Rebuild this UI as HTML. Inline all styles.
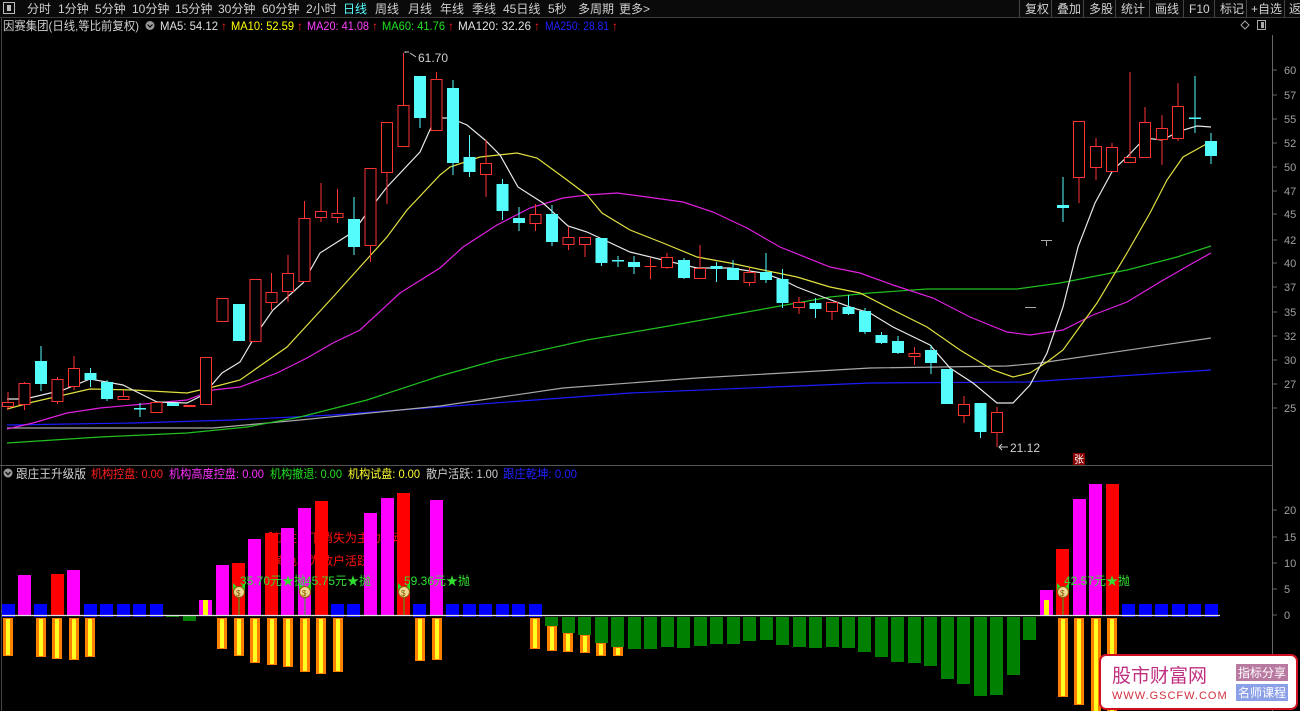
<!DOCTYPE html>
<html><head><meta charset="utf-8"><style>
html,body{margin:0;padding:0;background:#000;width:1300px;height:711px;overflow:hidden;font-family:"Liberation Sans","Noto Sans CJK SC",sans-serif}
svg{display:block}
text{font-family:"Liberation Sans","Noto Sans CJK SC",sans-serif}
.r line{stroke:#ff3232;stroke-width:1}
.r rect{fill:#000;stroke:#ff3232;stroke-width:1}
.c line{stroke:#54fcfc;stroke-width:1}
.c rect{fill:#54fcfc}
.ma{fill:none;stroke-width:1.2}
.tb{fill:#d0d0d0;font-size:12px}
.ax{fill:#a0a0a0;font-size:11px}
</style></head><body>
<svg width="1300" height="711" viewBox="0 0 1300 711" xmlns="http://www.w3.org/2000/svg">
<rect width="1300" height="711" fill="#000"/>
<!-- toolbar -->
<rect x="0" y="0" width="1300" height="17" fill="#0a0a0a"/>
<line x1="0" y1="17.5" x2="1300" y2="17.5" stroke="#3a3a3a"/>
<rect x="3.5" y="2.5" width="11" height="11" fill="none" stroke="#bbb"/><rect x="7" y="5" width="4" height="6" fill="#bbb"/>
<g class="tb">
<text x="27" y="13">分时</text><text x="58" y="13">1分钟</text><text x="95" y="13">5分钟</text><text x="132" y="13">10分钟</text><text x="175" y="13">15分钟</text><text x="218" y="13">30分钟</text><text x="262" y="13">60分钟</text><text x="306" y="13">2小时</text><text x="343" y="13" fill="#54fcfc">日线</text><text x="375" y="13">周线</text><text x="408" y="13">月线</text><text x="440" y="13">年线</text><text x="472" y="13">季线</text><text x="503" y="13">45日线</text><text x="548" y="13">5秒</text><text x="578" y="13">多周期</text><text x="619" y="13">更多&gt;</text>
<text x="1025" y="13">复权</text><text x="1057" y="13">叠加</text><text x="1089" y="13">多股</text><text x="1121" y="13">统计</text><text x="1155" y="13">画线</text><text x="1189" y="13">F10</text><text x="1220" y="13">标记</text><text x="1251" y="13">+自选</text><text x="1289" y="13">返</text>
</g>
<g stroke="#444"><line x1="1019.5" y1="0" x2="1019.5" y2="17"/><line x1="1051.5" y1="0" x2="1051.5" y2="17"/><line x1="1083.5" y1="0" x2="1083.5" y2="17"/><line x1="1115.5" y1="0" x2="1115.5" y2="17"/><line x1="1149.5" y1="0" x2="1149.5" y2="17"/><line x1="1183.5" y1="0" x2="1183.5" y2="17"/><line x1="1214.5" y1="0" x2="1214.5" y2="17"/><line x1="1246.5" y1="0" x2="1246.5" y2="17"/><line x1="1284.5" y1="0" x2="1284.5" y2="17"/></g>
<!-- header -->
<g font-size="12">
<text x="3" y="30" fill="#d0d0d0" textLength="136" lengthAdjust="spacingAndGlyphs">因赛集团(日线,等比前复权)</text>
<circle cx="150" cy="25.5" r="4.5" fill="#999"/><path d="M147.5 24.5 L150 27 L152.5 24.5" stroke="#000" fill="none" stroke-width="1.2"/>
<text x="160" y="30" fill="#e0e0e0" textLength="58" lengthAdjust="spacingAndGlyphs">MA5: 54.12</text><text x="221" y="30" fill="#ff2020">↑</text>
<text x="231" y="30" fill="#ffff00" textLength="63" lengthAdjust="spacingAndGlyphs">MA10: 52.59</text><text x="297" y="30" fill="#ff2020">↑</text>
<text x="307" y="30" fill="#ff40ff" textLength="62" lengthAdjust="spacingAndGlyphs">MA20: 41.08</text><text x="372" y="30" fill="#ff2020">↑</text>
<text x="382" y="30" fill="#20e020" textLength="63" lengthAdjust="spacingAndGlyphs">MA60: 41.76</text><text x="448" y="30" fill="#ff2020">↑</text>
<text x="458" y="30" fill="#e0e0e0" textLength="73" lengthAdjust="spacingAndGlyphs">MA120: 32.26</text><text x="534" y="30" fill="#ff2020">↑</text>
<text x="545" y="30" fill="#2020ff" textLength="64" lengthAdjust="spacingAndGlyphs">MA250: 28.81</text><text x="612" y="30" fill="#ff2020">↑</text>
</g>
<path d="M1245 21 L1249 25 L1245 29 L1241 25 Z" fill="none" stroke="#aaa"/>
<rect x="1257.5" y="20.5" width="8" height="9" fill="none" stroke="#aaa"/><rect x="1261" y="22" width="3" height="6" fill="#aaa"/>
<line x1="1.5" y1="18" x2="1.5" y2="711" stroke="#444"/>
<!-- right axis -->
<line x1="1272.5" y1="35" x2="1272.5" y2="711" stroke="#666"/>
<line x1="0" y1="465.5" x2="1272" y2="465.5" stroke="#555"/>
<g class="ax">
<text x="1284" y="74">60</text><text x="1284" y="99">57</text><text x="1284" y="123">55</text><text x="1284" y="147">52</text><text x="1284" y="171">50</text><text x="1284" y="195">47</text><text x="1284" y="218">45</text><text x="1284" y="244">42</text><text x="1284" y="267">40</text><text x="1284" y="291">37</text><text x="1284" y="316">35</text><text x="1284" y="340">32</text><text x="1284" y="364">30</text><text x="1284" y="388">27</text><text x="1284" y="412">25</text>
<text x="1284" y="514">20</text><text x="1284" y="541">15</text><text x="1284" y="567">10</text><text x="1284" y="593">5</text><text x="1284" y="619">0</text>
</g>
<g stroke="#666"><line x1="1272" y1="70" x2="1277" y2="70"/><line x1="1272" y1="95" x2="1277" y2="95"/><line x1="1272" y1="119" x2="1277" y2="119"/><line x1="1272" y1="143" x2="1277" y2="143"/><line x1="1272" y1="167" x2="1277" y2="167"/><line x1="1272" y1="191" x2="1277" y2="191"/><line x1="1272" y1="214" x2="1277" y2="214"/><line x1="1272" y1="240" x2="1277" y2="240"/><line x1="1272" y1="263" x2="1277" y2="263"/><line x1="1272" y1="287" x2="1277" y2="287"/><line x1="1272" y1="312" x2="1277" y2="312"/><line x1="1272" y1="336" x2="1277" y2="336"/><line x1="1272" y1="360" x2="1277" y2="360"/><line x1="1272" y1="384" x2="1277" y2="384"/><line x1="1272" y1="408" x2="1277" y2="408"/><line x1="1272" y1="510" x2="1277" y2="510"/><line x1="1272" y1="537" x2="1277" y2="537"/><line x1="1272" y1="563" x2="1277" y2="563"/><line x1="1272" y1="589" x2="1277" y2="589"/><line x1="1272" y1="615" x2="1277" y2="615"/></g>

<!-- MA lines -->
<polyline class="ma" stroke="#1c1cff" points="7,425 133,423 233,420 333,415 440,407 630,393 870,383 1027,382 1211,370"/>
<polyline class="ma" stroke="#a8a8a8" points="7,428 213,428 300,420 440,406 563,388 697,378 870,368 1007,366 1040,363 1211,338"/>
<polyline class="ma" stroke="#20c020" points="7,443 100,437 187,433 247,427 300,417 367,400 440,376 497,360 587,340 663,327 747,312 830,297 870,293 927,289 1017,289 1060,283 1127,270 1177,257 1211,246"/>
<polyline class="ma" stroke="#e020e0" points="7,429 33,423 67,413 100,408 133,405 187,400 213,390 240,387 277,373 307,358 333,343 360,330 400,293 440,268 463,247 497,225 530,208 563,198 587,195 617,193 647,197 683,202 713,212 747,228 780,247 830,267 860,273 893,285 933,298 970,317 1007,332 1030,335 1063,330 1093,315 1127,302 1160,282 1193,263 1211,253"/>
<polyline class="ma" stroke="#e0e040" points="7,409 33,402 90,389 133,390 187,393 213,387 240,380 287,347 333,297 387,237 407,210 440,175 450,167 480,157 517,153 537,158 563,177 587,195 602,213 630,230 663,243 697,257 730,263 763,270 797,277 830,287 860,293 893,310 927,327 960,350 993,370 1013,377 1030,373 1047,362 1063,350 1097,303 1127,253 1150,213 1167,180 1183,157 1210,142"/>
<polyline class="ma" stroke="#e8e8e8" points="7,399 25,399 63,390 90,379 123,385 157,402 187,403 203,395 222,373 240,362 257,333 273,310 303,283 320,253 353,232 367,213 387,187 420,152 433,123 440,118 450,118 467,125 485,140 500,155 518,187 543,203 568,226 587,232 630,252 663,260 697,268 730,268 763,273 783,280 797,287 823,297 850,307 870,313 893,327 930,345 950,368 973,383 997,403 1013,403 1030,385 1047,353 1063,307 1078,247 1095,203 1113,170 1127,157 1145,138 1162,140 1180,131 1197,126 1211,127"/>

<!-- candles -->
<g class="r">
<line x1="8" y1="392" x2="8" y2="410"/><rect x="2.5" y="402.5" width="11" height="4"/>
<line x1="24.5" y1="382" x2="24.5" y2="410"/><rect x="19" y="383.5" width="11" height="21"/>
<line x1="57.5" y1="377" x2="57.5" y2="404"/><rect x="52" y="379.5" width="11" height="22"/>
<line x1="74" y1="356" x2="74" y2="390"/><rect x="68.5" y="368.5" width="11" height="18"/>
<line x1="123.5" y1="390" x2="123.5" y2="399"/><rect x="118" y="396.5" width="11" height="3"/>
<rect x="151" y="402.5" width="11" height="10"/>
<rect x="184" y="405.5" width="11" height="1"/>
<rect x="200.5" y="357.5" width="11" height="47"/>
<rect x="217" y="298.5" width="11" height="23"/>
<rect x="250" y="279.5" width="11" height="62"/>
<line x1="271.5" y1="273" x2="271.5" y2="310"/><rect x="266" y="292.5" width="11" height="10"/>
<line x1="288" y1="255" x2="288" y2="302"/><rect x="282.5" y="273.5" width="11" height="18"/>
<line x1="304.5" y1="201" x2="304.5" y2="282"/><rect x="299" y="218.5" width="11" height="63"/>
<line x1="321" y1="183" x2="321" y2="222"/><rect x="315.5" y="211.5" width="11" height="6"/>
<line x1="337.5" y1="189" x2="337.5" y2="223"/><rect x="332" y="213.5" width="11" height="4"/>
<line x1="370.5" y1="168" x2="370.5" y2="262"/><rect x="365" y="168.5" width="11" height="77"/>
<line x1="387" y1="122" x2="387" y2="204"/><rect x="381.5" y="122.5" width="11" height="50"/>
<line x1="403.5" y1="53" x2="403.5" y2="147"/><rect x="398" y="105.5" width="11" height="41"/>
<line x1="436.5" y1="72" x2="436.5" y2="131"/><rect x="431" y="79.5" width="11" height="51"/>
<line x1="486" y1="140" x2="486" y2="197"/><rect x="480.5" y="163.5" width="11" height="11"/>
<line x1="535.5" y1="204" x2="535.5" y2="231"/><rect x="530" y="214.5" width="11" height="9"/>
<line x1="568.5" y1="227" x2="568.5" y2="250"/><rect x="563" y="237.5" width="11" height="7"/>
<line x1="585" y1="237" x2="585" y2="257"/><rect x="579.5" y="237.5" width="11" height="7"/>
<line x1="650.5" y1="258" x2="650.5" y2="279"/><line x1="644.5" y1="266.5" x2="656.5" y2="266.5"/>
<line x1="667" y1="253" x2="667" y2="269"/><rect x="661.5" y="257.5" width="11" height="10"/>
<line x1="700" y1="245" x2="700" y2="278"/><rect x="694.5" y="268.5" width="11" height="10"/>
<line x1="749.5" y1="268" x2="749.5" y2="286"/><rect x="744" y="272.5" width="11" height="10"/>
<line x1="799" y1="297" x2="799" y2="314"/><rect x="793.5" y="302.5" width="11" height="5"/>
<line x1="832" y1="302" x2="832" y2="320"/><rect x="826.5" y="302.5" width="11" height="9"/>
<line x1="914.5" y1="347" x2="914.5" y2="365"/><rect x="909" y="353.5" width="11" height="3"/>
<line x1="964" y1="396" x2="964" y2="423"/><rect x="958.5" y="404.5" width="11" height="11"/>
<line x1="997" y1="407" x2="997" y2="447"/><rect x="991.5" y="412.5" width="11" height="20"/>
<line x1="1079" y1="121" x2="1079" y2="203"/><rect x="1073.5" y="121.5" width="11" height="56"/>
<line x1="1096" y1="138" x2="1096" y2="180"/><rect x="1090.5" y="146.5" width="11" height="21"/>
<line x1="1112" y1="143" x2="1112" y2="171"/><rect x="1106.5" y="147.5" width="11" height="24"/>
<line x1="1130" y1="72" x2="1130" y2="163"/><rect x="1124.5" y="157.5" width="11" height="5"/>
<line x1="1145" y1="107" x2="1145" y2="157"/><rect x="1139.5" y="122.5" width="11" height="35"/>
<line x1="1162" y1="115" x2="1162" y2="165"/><rect x="1156.5" y="128.5" width="11" height="11"/>
<line x1="1178" y1="83" x2="1178" y2="141"/><rect x="1172.5" y="106.5" width="11" height="32"/>
</g>
<g class="c">
<line x1="41" y1="346" x2="41" y2="391"/><rect x="35" y="361" width="12" height="23"/>
<line x1="90.5" y1="368" x2="90.5" y2="387"/><rect x="84.5" y="373" width="12" height="7"/>
<line x1="107" y1="380" x2="107" y2="401"/><rect x="101" y="382" width="12" height="17"/>
<line x1="140" y1="403" x2="140" y2="417"/><rect x="134" y="408" width="12" height="1.5"/>
<rect x="167" y="403" width="12" height="3"/>
<rect x="233" y="304" width="12" height="37"/>
<line x1="354" y1="197" x2="354" y2="255"/><rect x="348" y="219" width="12" height="28"/>
<line x1="420" y1="76" x2="420" y2="128"/><rect x="414" y="76" width="12" height="42"/>
<line x1="453" y1="80" x2="453" y2="175"/><rect x="447" y="88" width="12" height="75"/>
<line x1="469.5" y1="135" x2="469.5" y2="177"/><rect x="463.5" y="157" width="12" height="15"/>
<line x1="502.5" y1="179" x2="502.5" y2="220"/><rect x="496.5" y="184" width="12" height="27"/>
<line x1="519" y1="207" x2="519" y2="231"/><rect x="513" y="218" width="12" height="5"/>
<line x1="552" y1="205" x2="552" y2="246"/><rect x="546" y="214" width="12" height="28"/>
<line x1="601.5" y1="238" x2="601.5" y2="266"/><rect x="595.5" y="238" width="12" height="25"/>
<line x1="618" y1="256" x2="618" y2="267"/><rect x="612" y="260" width="12" height="1.5"/>
<line x1="634" y1="256" x2="634" y2="274"/><rect x="628" y="262" width="12" height="5"/>
<line x1="684" y1="258" x2="684" y2="279"/><rect x="678" y="260" width="12" height="18"/>
<line x1="716.5" y1="262" x2="716.5" y2="282"/><rect x="710.5" y="266" width="12" height="3"/>
<line x1="733" y1="260" x2="733" y2="280"/><rect x="727" y="268" width="12" height="12"/>
<line x1="766" y1="253" x2="766" y2="283"/><rect x="760" y="272" width="12" height="8"/>
<line x1="782.5" y1="269" x2="782.5" y2="308"/><rect x="776.5" y="279" width="12" height="24"/>
<line x1="815.5" y1="298" x2="815.5" y2="318"/><rect x="809.5" y="303" width="12" height="6"/>
<line x1="848.5" y1="295" x2="848.5" y2="315"/><rect x="842.5" y="307" width="12" height="7"/>
<line x1="865" y1="308" x2="865" y2="334"/><rect x="859" y="311" width="12" height="21"/>
<line x1="881.5" y1="332" x2="881.5" y2="344"/><rect x="875.5" y="335" width="12" height="8"/>
<line x1="898" y1="336" x2="898" y2="354"/><rect x="892" y="341" width="12" height="12"/>
<line x1="931" y1="345" x2="931" y2="374"/><rect x="925" y="350" width="12" height="13"/>
<rect x="941" y="369" width="12" height="35"/>
<line x1="980.5" y1="403" x2="980.5" y2="438"/><rect x="974.5" y="403" width="12" height="29"/>
<line x1="1063" y1="177" x2="1063" y2="222"/><rect x="1057" y="205" width="12" height="3"/>
<line x1="1195" y1="76" x2="1195" y2="133"/><rect x="1189" y="117.5" width="12" height="1.5"/>
<line x1="1211" y1="133" x2="1211" y2="164"/><rect x="1205" y="141" width="12" height="15"/>
</g>
<line x1="1025" y1="307.5" x2="1036" y2="307.5" stroke="#aaa"/>
<line x1="1041" y1="240.5" x2="1052" y2="240.5" stroke="#aaa"/><line x1="1046.5" y1="240" x2="1046.5" y2="246" stroke="#aaa"/>
<!-- labels -->
<path d="M405 53 L405 52 L409 52 M410 53 L416 57" stroke="#ccc" fill="none"/>
<text x="418" y="62" fill="#d0d0d0" font-size="12">61.70</text>
<path d="M1008 447 L999 447 M1002 444 L999 447 L1002 450" stroke="#ccc" fill="none"/>
<text x="1010" y="452" fill="#d0d0d0" font-size="12">21.12</text>
<rect x="1073" y="453" width="12" height="12" fill="#8a0000"/><text x="1074" y="463" fill="#fff" font-size="10">张</text>

<!-- indicator header -->
<g font-size="12">
<circle cx="8" cy="473" r="4.5" fill="#999"/><path d="M5.5 472 L8 474.5 L10.5 472" stroke="#000" fill="none" stroke-width="1.2"/>
<text x="16" y="478" fill="#d0d0d0" textLength="70" lengthAdjust="spacingAndGlyphs">跟庄王升级版</text>
<text x="91" y="478" fill="#ff2020" textLength="72" lengthAdjust="spacingAndGlyphs">机构控盘: 0.00</text>
<text x="169" y="478" fill="#ff30ff" textLength="95" lengthAdjust="spacingAndGlyphs">机构高度控盘: 0.00</text>
<text x="270" y="478" fill="#20e020" textLength="72" lengthAdjust="spacingAndGlyphs">机构撤退: 0.00</text>
<text x="348" y="478" fill="#ffff30" textLength="72" lengthAdjust="spacingAndGlyphs">机构试盘: 0.00</text>
<text x="426" y="478" fill="#d0d0d0" textLength="72" lengthAdjust="spacingAndGlyphs">散户活跃: 1.00</text>
<text x="503" y="478" fill="#2020ff" textLength="74" lengthAdjust="spacingAndGlyphs">跟庄乾坤: 0.00</text>
</g>
<!-- red notes (behind bars) -->
<text x="261" y="542" fill="#ff1010" font-size="12">【红柱以下消失为主力异动】</text>
<text x="261" y="565" fill="#ff1010" font-size="12">【黄色柱为散户活跃】</text>

<!-- positive bars -->
<g fill="#0000ff">
<rect x="2" y="604" width="13" height="13"/><rect x="34" y="604" width="13" height="13"/><rect x="84" y="604" width="13" height="13"/><rect x="100" y="604" width="13" height="13"/><rect x="117" y="604" width="13" height="13"/><rect x="133" y="604" width="13" height="13"/><rect x="150" y="604" width="13" height="13"/>
<rect x="331" y="604" width="13" height="13"/><rect x="347" y="604" width="13" height="13"/><rect x="413" y="604" width="13" height="13"/>
<rect x="446" y="604" width="13" height="13"/><rect x="463" y="604" width="13" height="13"/><rect x="479" y="604" width="13" height="13"/><rect x="496" y="604" width="13" height="13"/><rect x="512" y="604" width="13" height="13"/><rect x="529" y="604" width="13" height="13"/>
<rect x="1122" y="604" width="13" height="13"/><rect x="1139" y="604" width="13" height="13"/><rect x="1155" y="604" width="13" height="13"/><rect x="1172" y="604" width="13" height="13"/><rect x="1188" y="604" width="13" height="13"/><rect x="1205" y="604" width="13" height="13"/>
</g>
<g fill="#ff00ff">
<rect x="18" y="575" width="13" height="40"/><rect x="67" y="570" width="13" height="45"/><rect x="199" y="600" width="13" height="15"/><rect x="216" y="565" width="13" height="50"/>
<rect x="248" y="539" width="13" height="76"/><rect x="281" y="528" width="13" height="87"/><rect x="298" y="508" width="13" height="107"/>
<rect x="364" y="513" width="13" height="102"/><rect x="381" y="498" width="13" height="117"/><rect x="430" y="500" width="13" height="115"/>
<rect x="1040" y="590" width="13" height="25"/><rect x="1073" y="499" width="13" height="116"/><rect x="1089" y="484" width="13" height="131"/>
</g>
<g fill="#ff0000">
<rect x="51" y="574" width="13" height="41"/><rect x="232" y="563" width="13" height="52"/><rect x="265" y="533" width="13" height="82"/><rect x="315" y="501" width="13" height="114"/><rect x="397" y="493" width="13" height="122"/><rect x="1056" y="549" width="13" height="66"/><rect x="1106" y="484" width="13" height="131"/>
</g>
<rect x="203" y="600" width="5" height="15" fill="#ffff00"/><rect x="1044" y="600" width="5" height="15" fill="#ffff00"/>
<!-- green negatives -->
<g fill="#008000">
<rect x="166" y="615" width="13" height="2"/><rect x="183" y="615" width="13" height="6"/>
<rect x="545" y="617" width="13" height="9"/><rect x="562" y="617" width="13" height="16"/><rect x="578" y="617" width="13" height="18"/><rect x="595" y="617" width="13" height="26"/><rect x="611" y="617" width="13" height="30"/>
<rect x="628" y="617" width="13" height="32"/><rect x="644" y="617" width="13" height="32"/><rect x="661" y="617" width="13" height="30"/><rect x="677" y="617" width="13" height="31"/><rect x="694" y="617" width="13" height="29"/><rect x="710" y="617" width="13" height="27"/><rect x="727" y="617" width="13" height="27"/><rect x="743" y="617" width="13" height="24"/><rect x="760" y="617" width="13" height="23"/><rect x="776" y="617" width="13" height="28"/><rect x="793" y="617" width="13" height="30"/><rect x="809" y="617" width="13" height="31"/><rect x="826" y="617" width="13" height="30"/><rect x="842" y="617" width="13" height="31"/><rect x="858" y="617" width="13" height="35"/><rect x="875" y="617" width="13" height="40"/><rect x="891" y="617" width="13" height="45"/><rect x="908" y="617" width="13" height="46"/><rect x="924" y="617" width="13" height="49"/><rect x="941" y="617" width="13" height="62"/><rect x="957" y="617" width="13" height="67"/><rect x="974" y="617" width="13" height="79"/><rect x="990" y="617" width="13" height="78"/><rect x="1007" y="617" width="13" height="58"/><rect x="1023" y="617" width="13" height="23"/>
</g>
<!-- orange negatives -->
<g fill="#ff8000">
<rect x="3" y="618" width="10" height="38"/><rect x="36" y="618" width="10" height="39"/><rect x="52" y="618" width="10" height="41"/><rect x="69" y="618" width="10" height="42"/><rect x="85" y="618" width="10" height="39"/>
<rect x="217" y="618" width="10" height="31"/><rect x="234" y="618" width="10" height="38"/><rect x="250" y="618" width="10" height="45"/><rect x="267" y="618" width="10" height="47"/><rect x="283" y="618" width="10" height="49"/><rect x="300" y="618" width="10" height="54"/><rect x="316" y="618" width="10" height="56"/><rect x="333" y="618" width="10" height="54"/>
<rect x="415" y="618" width="10" height="43"/><rect x="432" y="618" width="10" height="42"/><rect x="530" y="618" width="10" height="31"/>
<rect x="547" y="626" width="10" height="25"/><rect x="563" y="633" width="10" height="19"/><rect x="580" y="635" width="10" height="18"/><rect x="596" y="643" width="10" height="13"/><rect x="613" y="647" width="10" height="9"/>
<rect x="1058" y="618" width="10" height="79"/><rect x="1074" y="618" width="10" height="87"/><rect x="1091" y="618" width="10" height="93"/><rect x="1107" y="618" width="10" height="93"/>
</g>
<g fill="#ffff20">
<rect x="6" y="619" width="4" height="36"/><rect x="39" y="619" width="4" height="37"/><rect x="55" y="619" width="4" height="39"/><rect x="72" y="619" width="4" height="40"/><rect x="88" y="619" width="4" height="37"/>
<rect x="220" y="619" width="4" height="29"/><rect x="237" y="619" width="4" height="36"/><rect x="253" y="619" width="4" height="43"/><rect x="270" y="619" width="4" height="45"/><rect x="286" y="619" width="4" height="47"/><rect x="303" y="619" width="4" height="52"/><rect x="319" y="619" width="4" height="54"/><rect x="336" y="619" width="4" height="52"/>
<rect x="418" y="619" width="4" height="41"/><rect x="435" y="619" width="4" height="40"/><rect x="533" y="619" width="4" height="29"/>
<rect x="550" y="627" width="4" height="23"/><rect x="566" y="634" width="4" height="17"/><rect x="583" y="636" width="4" height="16"/><rect x="599" y="644" width="4" height="11"/><rect x="616" y="648" width="4" height="7"/>
<rect x="1061" y="619" width="4" height="77"/><rect x="1077" y="619" width="4" height="85"/><rect x="1094" y="619" width="4" height="92"/><rect x="1110" y="619" width="4" height="92"/>
</g>
<line x1="2" y1="615.5" x2="1220" y2="615.5" stroke="#e0e0e0" stroke-width="1.2"/>

<!-- money bags -->
<g>
<g transform="translate(239,0)"><line x1="0" y1="596" x2="0" y2="615" stroke="#20c020"/><path d="M-6 583 L-2 587 L-6 590 Z M6 583 L2 587 L6 590 Z" fill="#20e020"/><circle cx="0" cy="592" r="5.5" fill="#f0d890" stroke="#8a5a00"/><text x="-3" y="596" font-size="8" fill="#8a5a00">$</text></g>
<g transform="translate(305,0)"><line x1="0" y1="596" x2="0" y2="615" stroke="#20c020"/><path d="M-6 583 L-2 587 L-6 590 Z M6 583 L2 587 L6 590 Z" fill="#20e020"/><circle cx="0" cy="592" r="5.5" fill="#f0d890" stroke="#8a5a00"/><text x="-3" y="596" font-size="8" fill="#8a5a00">$</text></g>
<g transform="translate(404,0)"><line x1="0" y1="596" x2="0" y2="615" stroke="#20c020"/><path d="M-6 583 L-2 587 L-6 590 Z M6 583 L2 587 L6 590 Z" fill="#20e020"/><circle cx="0" cy="592" r="5.5" fill="#f0d890" stroke="#8a5a00"/><text x="-3" y="596" font-size="8" fill="#8a5a00">$</text></g>
<g transform="translate(1063,0)"><line x1="0" y1="596" x2="0" y2="615" stroke="#20c020"/><path d="M-6 583 L-2 587 L-6 590 Z M6 583 L2 587 L6 590 Z" fill="#20e020"/><circle cx="0" cy="592" r="5.5" fill="#f0d890" stroke="#8a5a00"/><text x="-3" y="596" font-size="8" fill="#8a5a00">$</text></g>
</g>
<g font-size="12" fill="#30e030">
<text x="240" y="585">35.70元★抛</text><text x="305" y="585">45.75元★抛</text><text x="404" y="585">59.36元★抛</text><text x="1064" y="585">42.57元★抛</text>
</g>

<!-- watermark -->
<rect x="1100" y="655" width="197" height="54" rx="6" fill="#fff" stroke="#d01020" stroke-width="2"/>
<text x="1112" y="682" font-size="19" fill="#c03080" font-family="Liberation Serif,Noto Serif CJK SC,serif">股市财富网</text>
<text x="1112" y="699" font-size="11" fill="#d03040" font-family="Liberation Serif,serif" letter-spacing="1">WWW.GSCFW.COM</text>
<rect x="1236" y="664" width="52" height="17" fill="#b87aa0"/><text x="1238" y="677" font-size="12" fill="#fff">指标分享</text>
<rect x="1236" y="684" width="52" height="17" fill="#8ca0e8"/><text x="1238" y="697" font-size="12" fill="#fff">名师课程</text>
</svg>
</body></html>
